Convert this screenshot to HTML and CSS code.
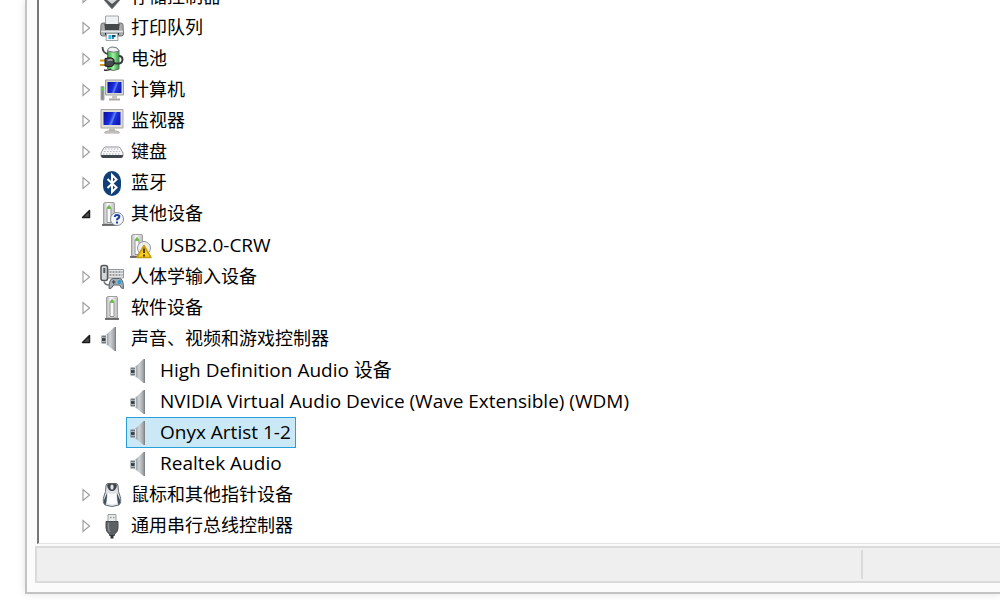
FILE: index.html
```
<!DOCTYPE html>
<html lang="zh-CN">
<head>
    <meta charset="UTF-8">
    <meta name="viewport" content="width=device-width, initial-scale=1.0">
    <title>设备管理器</title>
    <link rel="stylesheet" href="styles.css">
</head>
<body>
    <!-- shared icons -->
    <svg class="defs" width="0" height="0" aria-hidden="true">
        <defs>
            <linearGradient id="metal" x1="0" y1="0" x2="1" y2="0">
                <stop offset="0" stop-color="#8b9297"/>
                <stop offset="0.4" stop-color="#cfd3d6"/>
                <stop offset="0.8" stop-color="#a3a7ab"/>
                <stop offset="1" stop-color="#74797d"/>
            </linearGradient>
            <linearGradient id="screen" x1="0" y1="0.2" x2="1" y2="0.5">
                <stop offset="0" stop-color="#0a10a0"/>
                <stop offset="0.45" stop-color="#1a2ee0"/>
                <stop offset="0.6" stop-color="#5f80f6"/>
                <stop offset="0.7" stop-color="#1c2fd8"/>
                <stop offset="1" stop-color="#0f1bb8"/>
            </linearGradient>
            <linearGradient id="case" x1="0" y1="0" x2="1" y2="0">
                <stop offset="0" stop-color="#b5b5b5"/>
                <stop offset="0.4" stop-color="#fafafa"/>
                <stop offset="1" stop-color="#bdbdbd"/>
            </linearGradient>
            <linearGradient id="green" x1="0" y1="0" x2="1" y2="0">
                <stop offset="0" stop-color="#2fa03d"/>
                <stop offset="0.5" stop-color="#a4f0a2"/>
                <stop offset="1" stop-color="#2b9a38"/>
            </linearGradient>
            <symbol id="closed" viewBox="0 0 12 14">
                <path d="M3 1.5v11L9.5 7z" fill="#fff" stroke="#a0a0a0" stroke-width="1.2"/>
            </symbol>
            <symbol id="open" viewBox="0 0 12 14">
                <path d="M9.5 3.500v7h-7z" fill="#505050" stroke="#1e1e1e" stroke-width="1.500" stroke-linejoin="round"/>
            </symbol>
            <symbol id="speaker" viewBox="0 0 24 24">
                <path d="M16 0v24h-1.500L6 17V8l8.500-8z" fill="url(#metal)"/>
                <path d="M1.500 8.500H6v8H1.500z" fill="#6f787f"/>
                <path d="M1.500 10.500H6M1.500 14.500H6" stroke="#a9b2b8"/>
                <path d="M2 12.500h3" stroke="#343b41" stroke-width="2.500"/>
                <path d="M6.500 8v9" stroke="#e0e5e8"/>
            </symbol>
            <symbol id="tower" viewBox="0 0 24 24">
                <path d="M6.500 1.500 8 .5h9l.5 1V22h-11z" fill="url(#case)" stroke="#a0a0a0"/>
                <path d="M10 20.500V5.500q2-3 4 0v15z" fill="#fbfbfb" stroke="#909090"/>
                <path d="M10.500 6.500 12 3.500l1.500 3z" fill="#42b51b" stroke="#69c447"/>
                <path d="M5 23h14" stroke="#444" stroke-width="1.500"/>
            </symbol>
        </defs>
    </svg>

    <main class="window">
        <section class="pane">
            <ul class="tree">
                <li>
                    <div class="row">
                        <button class="toggle" aria-label="展开"><svg><use href="#closed"/></svg></button>
                        <span class="item">
                            <svg class="icon" viewBox="0 0 24 24">
                                <path d="M12 24 4 15l8-9 8 9z" fill="#505356" stroke="#8d8f91"/>
                                <path d="m7 15 5 4 5-4-5-5z" fill="#d7d7d7"/>
                            </svg>
                            存储控制器
                        </span>
                    </div>
                </li>
                <li>
                    <div class="row">
                        <button class="toggle" aria-label="展开"><svg><use href="#closed"/></svg></button>
                        <span class="item">
                            <svg class="icon" viewBox="0 0 24 24">
                                <path d="M5.500 0h13v9h-13z" fill="#eef0f2" stroke="#a3a5a8"/>
                                <path d="M1 9q0-2 2-2h2v3h14V7h2q2 0 2 2l.5 9q0 2-2 2h-19q-2 0-2-2z" fill="#a9abad" stroke="#717477"/>
                                <path d="M4.500 8h15l-.5 6H5z" fill="#46494c"/>
                                <path d="M1 15.500h22" stroke="#e3e4e5" stroke-width="1.500"/>
                                <path d="M5 18h14" stroke="#24272a" stroke-width="2"/>
                                <path d="M6.500 17.500h11l.5 7H6z" fill="#f4f8fb" stroke="#9da5aa"/>
                                <path d="M8.500 19h3v4h-3z" fill="#45b9e5"/>
                                <path d="M12 19h3.500v2H12z" fill="#18475c"/>
                                <path d="M12 21h2v2h-2z" fill="#2e8bc9"/>
                            </svg>
                            打印队列
                        </span>
                    </div>
                </li>
                <li>
                    <div class="row">
                        <button class="toggle" aria-label="展开"><svg><use href="#closed"/></svg></button>
                        <span class="item">
                            <svg class="icon" viewBox="0 0 24 24">
                                <path d="M7.500 3h11.500v19q-6 3-11.500 0z" fill="url(#green)" stroke="#5f7a63"/>
                                <path d="M7.500 4Q8 0 13 0t6 4q-5 2.500-11.500 0z" fill="#f0f2f2" stroke="#6e7480"/>
                                <path d="M2.500 0q0 6 5.500 7" fill="none" stroke="#444b4e" stroke-width="1.800"/>
                                <path d="M14 16q8 2 8.500-3 0-4-3.500-4" fill="none" stroke="#32383b" stroke-width="2"/>
                                <path d="M0 13.500h6M0 18h6" stroke="#d89b1c" stroke-width="1.800"/>
                                <path d="M5 11.500 8 11q4-1 6 1.500v5q-2 3-6 2l-3-.5z" fill="#45494b" stroke="#17191a"/>
                                <path d="M7.500 13.500q3-1.500 5 0" fill="none" stroke="#aaa" stroke-width="1.500"/>
                                <path d="M4 23q4 1 7-1" fill="none" stroke="#333" stroke-width="1.500"/>
                            </svg>
                            电池
                        </span>
                    </div>
                </li>
                <li>
                    <div class="row">
                        <button class="toggle" aria-label="展开"><svg><use href="#closed"/></svg></button>
                        <span class="item">
                            <svg class="icon" viewBox="0 0 24 24">
                                <path d="M5.500 2h18v15h-18z" fill="#d9d7d2" stroke="#a3a19d"/>
                                <path d="M7.500 4h14v11h-14z" fill="url(#screen)"/>
                                <path d="M12 17.500h5v3h-5z" fill="#c5c3bf"/>
                                <path d="M9 21.500h11" stroke="#aaa8a4" stroke-width="2"/>
                                <path d="M1 8.500h3V22H1z" fill="#85898c" stroke="#a6a9ab"/>
                                <path d="M2.500 9.500v3" stroke="#4be03a" stroke-width="2"/>
                            </svg>
                            计算机
                        </span>
                    </div>
                </li>
                <li>
                    <div class="row">
                        <button class="toggle" aria-label="展开"><svg><use href="#closed"/></svg></button>
                        <span class="item">
                            <svg class="icon" viewBox="0 0 24 24">
                                <path d="M1 .5h22v18.500H1z" fill="#dfddd7" stroke="#a9a7a2"/>
                                <path d="M3.500 3h17v13h-17z" fill="url(#screen)"/>
                                <path d="M9 19.500h6V22H9z" fill="#bdbbb6"/>
                                <path d="M4.500 24Q5 22 8 22h8q3 0 3.500 2z" fill="#d7d5d1" stroke="#aaa8a4"/>
                            </svg>
                            监视器
                        </span>
                    </div>
                </li>
                <li>
                    <div class="row">
                        <button class="toggle" aria-label="展开"><svg><use href="#closed"/></svg></button>
                        <span class="item">
                            <svg class="icon" viewBox="0 0 24 24">
                                <path d="M1 13 3.500 8.500q.5-1.500 2-1.500h13q1.500 0 2 1.500L23 13v2.500q0 2-2 2H3q-2 0-2-2z" fill="#f6f6f7" stroke="#8f939a"/>
                                <path d="M1 15q0 3 2.500 3h17q2.500 0 2.500-3z" fill="#40454c"/>
                                <path d="M5 9h14M4 11.500h16M3 14h18" stroke="#b4b6ba" stroke-width="1.200" stroke-dasharray="1.500 1.500"/>
                            </svg>
                            键盘
                        </span>
                    </div>
                </li>
                <li>
                    <div class="row">
                        <button class="toggle" aria-label="展开"><svg><use href="#closed"/></svg></button>
                        <span class="item">
                            <svg class="icon" viewBox="0 0 24 24">
                                <rect x="3" y="0" width="18" height="25" rx="9" ry="10" fill="#123f76"/>
                                <path d="m7.500 8 9 8.500-4.500 4.500V4l4.500 4.500-9 8.500" fill="none" stroke="#fff" stroke-width="2"/>
                            </svg>
                            蓝牙
                        </span>
                    </div>
                </li>
                <li>
                    <div class="row">
                        <button class="toggle" aria-label="折叠"><svg><use href="#open"/></svg></button>
                        <span class="item">
                            <svg class="icon" viewBox="0 0 24 24">
                                <use href="#tower" x="-3" width="24" height="24"/>
                                <circle cx="17" cy="17" r="6.500" fill="#f3f6fb" stroke="#858c99"/>
                                <path d="M14.800 15q.2-2 2.200-2 2.300 0 2.300 1.800 0 1-1.300 1.700-1 .5-1 1.700M17 19.500v2" fill="none" stroke="#1f3fa5" stroke-width="2"/>
                            </svg>
                            其他设备
                        </span>
                    </div>
                    <ul>
                        <li>
                            <span class="item">
                                <svg class="icon" viewBox="0 0 24 24">
                                    <use href="#tower" x="-4" width="24" height="24"/>
                                    <circle cx="15" cy="14" r="6.500" fill="#eee" stroke="#999"/>
                                    <path d="m15 11.500 7 12H8z" fill="#f7cd1d" stroke="#c79a0c" stroke-width="1.500" stroke-linejoin="round"/>
                                    <path d="M15 14.500v4.500M15 20.500v2" stroke="#4a3a00" stroke-width="2"/>
                                </svg>
                                USB2.0-CRW
                            </span>
                        </li>
                    </ul>
                </li>
                <li>
                    <div class="row">
                        <button class="toggle" aria-label="展开"><svg><use href="#closed"/></svg></button>
                        <span class="item">
                            <svg class="icon" viewBox="0 0 24 24">
                                <path d="M8 4.500h15.500V13H8z" fill="#e4e5e6" stroke="#96999c"/>
                                <path d="M9.500 7h13M9.500 10h13" stroke="#85888b" stroke-width="1.500" stroke-dasharray="2 1"/>
                                <rect x="1" y=".5" width="6.500" height="15" rx="2" fill="#d5d7d9" stroke="#53585c" stroke-width="1.500"/>
                                <path d="M4.300 3v5" stroke="#53585c" stroke-width="2"/>
                                <path d="M4 16.500q1 4 6 3.500" fill="none" stroke="#777" stroke-width="1.500"/>
                                <path d="M9 23.500q0-10 4-10h6.500q4 0 4 10-2 1-4-3.500h-6q-2 4.500-4.500 3.500z" fill="#a3adb4" stroke="#5b656d"/>
                                <path d="M12 17h3.500M13.700 15.300v3.400" stroke="#3a4147" stroke-width="1.200"/>
                                <circle cx="19.500" cy="17" r="2" fill="#2c9bd0"/>
                            </svg>
                            人体学输入设备
                        </span>
                    </div>
                </li>
                <li>
                    <div class="row">
                        <button class="toggle" aria-label="展开"><svg><use href="#closed"/></svg></button>
                        <span class="item">
                            <svg class="icon"><use href="#tower"/></svg>
                            软件设备
                        </span>
                    </div>
                </li>
                <li>
                    <div class="row">
                        <button class="toggle" aria-label="折叠"><svg><use href="#open"/></svg></button>
                        <span class="item">
                            <svg class="icon"><use href="#speaker"/></svg>
                            声音、视频和游戏控制器
                        </span>
                    </div>
                    <ul>
                        <li>
                            <span class="item">
                                <svg class="icon"><use href="#speaker"/></svg>
                                High Definition Audio 设备
                            </span>
                        </li>
                        <li>
                            <span class="item">
                                <svg class="icon"><use href="#speaker"/></svg>
                                NVIDIA Virtual Audio Device (Wave Extensible) (WDM)
                            </span>
                        </li>
                        <li>
                            <span class="item selected">
                                <svg class="icon"><use href="#speaker"/></svg>
                                Onyx Artist 1-2
                            </span>
                        </li>
                        <li>
                            <span class="item">
                                <svg class="icon"><use href="#speaker"/></svg>
                                Realtek Audio
                            </span>
                        </li>
                    </ul>
                </li>
                <li>
                    <div class="row">
                        <button class="toggle" aria-label="展开"><svg><use href="#closed"/></svg></button>
                        <span class="item">
                            <svg class="icon" viewBox="0 0 24 24">
                                <path d="M8 .5h8q2 0 2 2.500 0 6 2 10 2 6-1 9-7 3-14 0-3-3-1-9 2-4 2-10 0-2.500 2-2.500z" fill="#dfe2e6" stroke="#686d73"/>
                                <path d="M7 2q1 6 5 6t5-6q-1-1.500-5-1.500T7 2z" fill="#3f444a"/>
                                <path d="M4 17q-1 3 1.500 5Q7 18 7 10zM20 17q1 3-1.500 5Q17 18 17 10z" fill="#3f5063"/>
                                <path d="M8 10q4 2 8 0l1 10q-5 3-10 0z" fill="#fff"/>
                                <rect x="10.500" y="1.500" width="3" height="5" rx="1.500" fill="#e5e7e9"/>
                            </svg>
                            鼠标和其他指针设备
                        </span>
                    </div>
                </li>
                <li>
                    <div class="row">
                        <button class="toggle" aria-label="展开"><svg><use href="#closed"/></svg></button>
                        <span class="item">
                            <svg class="icon" viewBox="0 0 24 24">
                                <path d="M8 .5h8v7H8z" fill="#e9ebed" stroke="#999da1"/>
                                <path d="M10 3.500h1.500M13 3.500h1.500" stroke="#999" stroke-width="1.500"/>
                                <path d="M6 7.500h12V14q0 4-3.500 6v1.500h-5V20Q6 18 6 14z" fill="#5c6064" stroke="#484c50"/>
                                <path d="M8.500 8.500v6q0 2 1.500 3.500" fill="none" stroke="#888c90" stroke-width="1.500"/>
                                <path d="M12 21v3.500" stroke="#303336" stroke-width="3"/>
                            </svg>
                            通用串行总线控制器
                        </span>
                    </div>
                </li>
            </ul>
        </section>
        <footer class="statusbar">
            <div class="status-main"></div>
            <div class="status-side"></div>
        </footer>
    </main>
</body>
</html>
```
FILE: styles.css
```
* {
    margin: 0;
    padding: 0;
    box-sizing: border-box;
}

body {
    display: flex;
    height: 100vh;
    overflow: hidden;
    background-color: #fff;
    color: #000;
    font-family: "Open Sans", "Noto Sans CJK SC", sans-serif;
    font-size: 18px;
    line-height: 29px;
}

ul {
    list-style: none;
}

.defs {
    position: absolute;
}

.window {
    flex: 1;
    min-width: 0;
    display: flex;
    flex-direction: column;
    margin: 0 0 6px 25px;
    padding: 0 0 9px 8px;
    border-left: 2px solid #c3c3c3;
    border-bottom: 2px solid #c3c3c3;
    background-color: #fbfbfb;
    box-shadow: 0 0 8px rgba(0, 0, 0, 0.12);
}

/* the list is scrolled to its end */
.pane {
    flex: 1;
    min-height: 0;
    display: flex;
    flex-direction: column;
    justify-content: flex-end;
    overflow: hidden;
    margin-left: 2px;
    margin-bottom: 2px;
    padding: 0 0 2px 41px;
    border-left: 2px solid #777;
    border-bottom: 1px solid #e3e3e3;
    background-color: #fff;
}

.row {
    display: flex;
    align-items: center;
}

.tree ul {
    padding: 1px 0 0 46px;
    font-size: 19px;
}

.toggle {
    display: flex;
    width: 17px;
    height: 14px;
    border: none;
    background: none;
}

.toggle svg {
    width: 12px;
    height: 14px;
}

.item {
    display: flex;
    align-items: center;
    gap: 7px;
    width: fit-content;
    height: 31px;
    padding: 0 4px 0 2px;
    border: 1px solid transparent;
    white-space: nowrap;
}

.item.selected {
    border-color: #26a0da;
    background-color: #cbe8f6;
}

.icon {
    flex: none;
    width: 24px;
    height: 24px;
    overflow: visible;
}

.statusbar {
    display: flex;
    height: 37px;
    padding: 2px 0;
    border: 2px solid #dadada;
    border-right: none;
    background-color: #efefef;
}

.status-main {
    flex: 6;
    border-right: 2px solid #dadada;
}

.status-side {
    flex: 1;
}
```
